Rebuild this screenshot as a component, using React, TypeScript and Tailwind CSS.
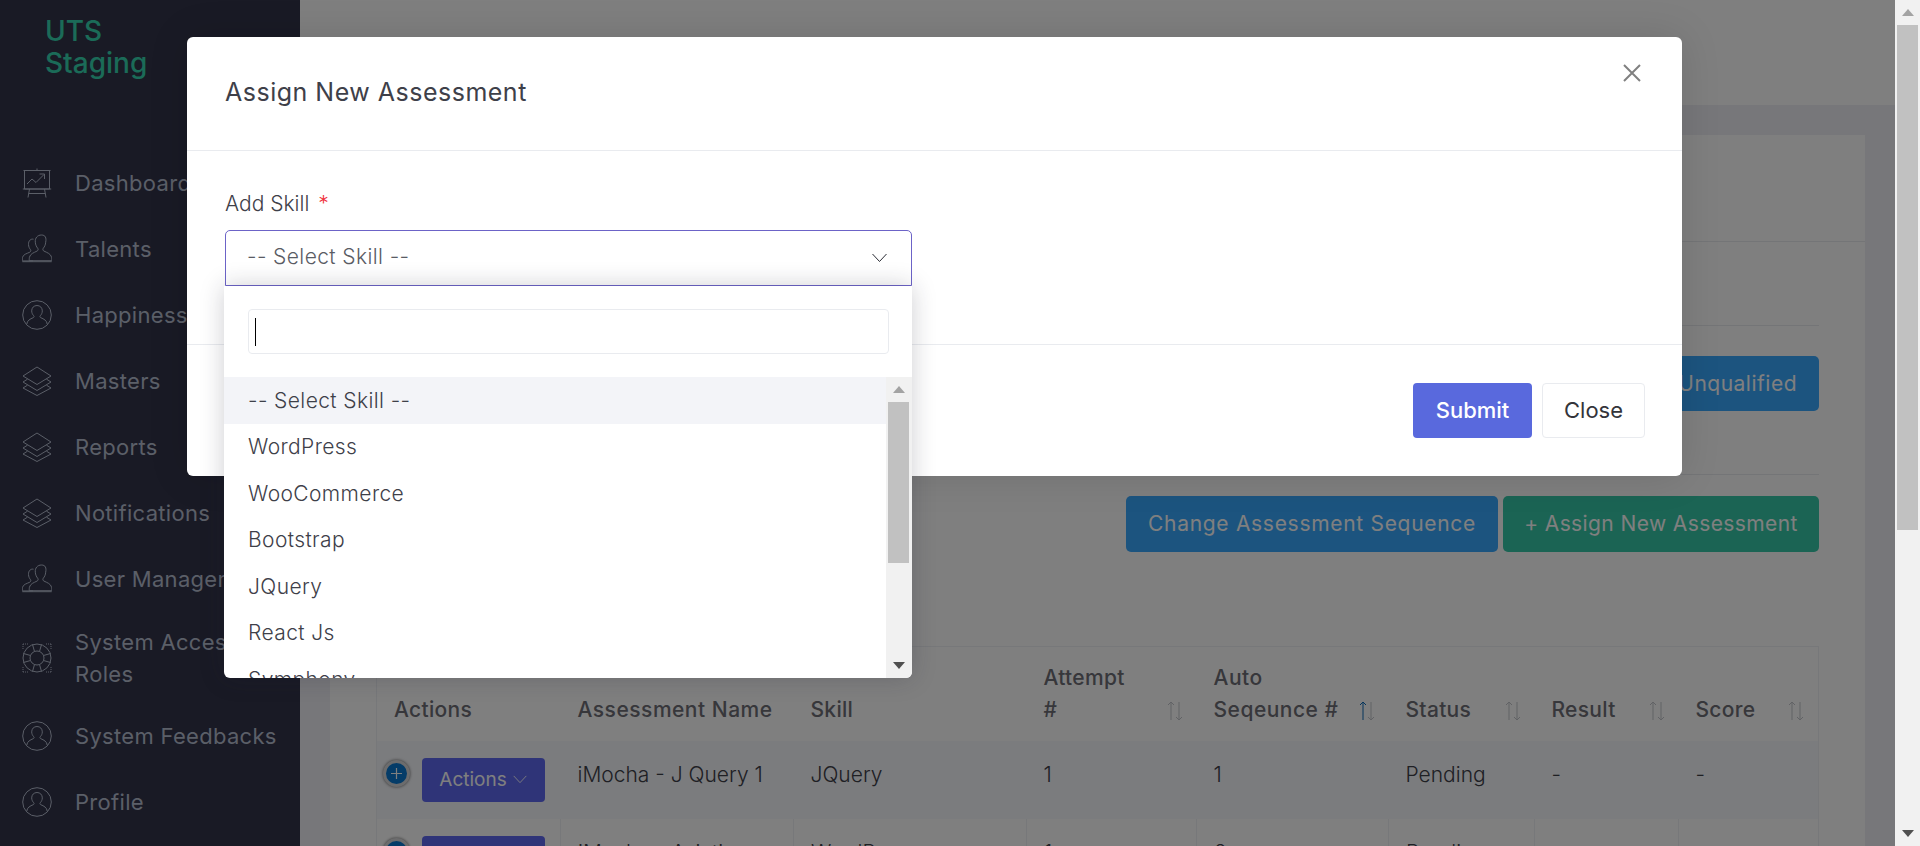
import type { ReactNode } from 'react'

type IconProps = { className?: string }

function PresentationIcon({ className }: IconProps) {
  return (
    <svg viewBox="0 0 30 30" fill="none" stroke="currentColor" strokeWidth="1" className={className}>
      <path d="M15 0.5v2M1.5 2.5h27M2.5 2.5v18.5h25V2.5M0.8 21h28.4" />
      <path d="M5 16l5-5 4 3.5 8-8M17.5 6h5v5" />
      <path d="M7.5 21l-1.5 8.5M22.5 21l1.5 8.5M6.7 25.5h16.6" />
    </svg>
  )
}

function UsersIcon({ className }: IconProps) {
  return (
    <svg viewBox="0 0 30 30" fill="none" stroke="currentColor" strokeWidth="1" className={className}>
      <path d="M11.5 5.2C8.5 4.6 6.3 7 6.5 10.5c.1 2.2 1 4 2 5.2.6.8.3 2-.7 2.5-2.5 1.2-6.8 2.2-7.3 5.2-.2 1.6-.1 3.5-.1 3.5h10.5" />
      <path d="M19.5 1c-4 0-6.600 2.900-6.200 7.200.2 2.600 1.200 4.700 2.400 6 .8 1 .5 2.300-.7 2.900-3 1.500-6.800 2.600-7.600 6.200-.2 1.200-.2 3.400-.2 3.400h22.600s0-2.200-.2-3.400c-.8-3.600-4.600-4.700-7.600-6.200-1.200-.6-1.500-1.900-.7-2.900 1.200-1.300 2.200-3.400 2.400-6C24.500 3.900 23.500 1 19.500 1z" />
      <path d="M0.3 27.700h29.400" />
    </svg>
  )
}

function UserCircleIcon({ className }: IconProps) {
  return (
    <svg viewBox="0 0 30 30" fill="none" stroke="currentColor" strokeWidth="1" className={className}>
      <circle cx="15" cy="15" r="14.300" />
      <path d="M15 5.500c-3.200 0-5.300 2.300-5.300 5.400 0 2 .9 3.700 2 4.800.7.700.4 1.600-.5 2-2.900 1.200-6.200 2.800-6.400 6.500M15 5.500c3.200 0 5.300 2.300 5.300 5.400 0 2-.9 3.700-2 4.800-.7.700-.4 1.600.5 2 2.900 1.200 6.200 2.800 6.400 6.500" />
    </svg>
  )
}

function LayersIcon({ className }: IconProps) {
  return (
    <svg viewBox="0 0 30 30" fill="none" stroke="currentColor" strokeWidth="1" className={className}>
      <path d="M15 1L29 10 15 18.500 1 10z" />
      <path d="M5.500 13.200L1 16l14 8.500L29 16l-4.500-2.800" />
      <path d="M5.500 19.200L1 22l14 7.500L29 22l-4.500-2.800" />
    </svg>
  )
}

function LifebuoyIcon({ className }: IconProps) {
  return (
    <svg viewBox="0 0 30 30" fill="none" stroke="currentColor" strokeWidth="1" className={className}>
      <circle cx="15" cy="15" r="14" />
      <circle cx="15" cy="15" r="7" />
      <path d="M10.500 1.500l2 7M19.500 1.500l-2 7M10.500 28.500l2-7M19.500 28.500l-2-7M1.500 10.500l7 2M1.500 19.500l7-2M28.500 10.500l-7 2M28.500 19.500l-7-2" />
      <path d="M1 1h6M1 1v6M29 1h-6M29 1v6M1 29h6M1 29v-6M29 29h-6M29 29v-6" strokeDasharray="1 1" />
    </svg>
  )
}

function SortArrows({ active }: { active?: boolean }) {
  return (
    <svg viewBox="0 0 18 20" fill="none" strokeWidth="1" className="-mr-[4px] h-[20px] w-[18px] shrink-0">
      <path d="M5 19V1M2 4l3-3 3 3" stroke={active ? '#0c6ab8' : '#c3c5ca'} />
      <path d="M13 1v18M10 16l3 3 3-3" stroke="#c3c5ca" />
    </svg>
  )
}

function ChevronDown({ className }: IconProps) {
  return (
    <svg viewBox="0 0 16 10" fill="none" stroke="currentColor" strokeWidth="1" className={className}>
      <path d="M1 1l7 7.500L15 1" />
    </svg>
  )
}

function ArrowUp({ color }: { color: string }) {
  return (
    <svg viewBox="0 0 12 7" className="h-[7px] w-[12px]">
      <path d="M6 0l6 7H0z" fill={color} />
    </svg>
  )
}

function ArrowDown({ color }: { color: string }) {
  return (
    <svg viewBox="0 0 12 7" className="h-[7px] w-[12px]">
      <path d="M0 0h12L6 7z" fill={color} />
    </svg>
  )
}

type NavItem = { label: ReactNode; icon: (p: IconProps) => ReactNode; tall?: boolean }

const navItems: NavItem[] = [
  { label: 'Dashboard', icon: PresentationIcon },
  { label: 'Talents', icon: UsersIcon },
  { label: 'Happiness Test', icon: UserCircleIcon },
  { label: 'Masters', icon: LayersIcon },
  { label: 'Reports', icon: LayersIcon },
  { label: 'Notifications', icon: LayersIcon },
  { label: 'User Management', icon: UsersIcon },
  { label: 'System Access & Roles', icon: LifebuoyIcon, tall: true },
  { label: 'System Feedbacks', icon: UserCircleIcon },
  { label: 'Profile', icon: UserCircleIcon },
]

const skills = ['WordPress', 'WooCommerce', 'Bootstrap', 'JQuery', 'React Js', 'Symphony']

const rows = [
  { name: 'iMocha - J Query 1', skill: 'JQuery', attempt: '1', seq: '1', status: 'Pending', result: '-', score: '-' },
  { name: 'iMocha - Aviation', skill: 'WordPress', attempt: '1', seq: '2', status: 'Pending', result: '-', score: '-' },
]

function Sidebar() {
  return (
    <aside className="flex w-[300px] shrink-0 flex-col bg-[#32344a] text-[#b6bed0]">
      <div className="h-[150px] pl-[45px] pt-[15px] text-[28px] font-medium leading-[32px] text-[#36d6b0]">
        <div>UTS</div>
        <div>Staging</div>
      </div>
      {navItems.map((item, i) => {
        const Icon = item.icon
        return (
          <div key={i} className={`flex items-center gap-[23px] pl-[22px] pr-[20px] ${item.tall ? 'h-[91px]' : 'h-[66px]'}`}>
            <Icon className="h-[30px] w-[30px] shrink-0" />
            <span className="text-[22px] leading-[32px] tracking-[0.3px]">{item.label}</span>
          </div>
        )
      })}
    </aside>
  )
}

function PageContent() {
  return (
    <main className="min-w-0 flex-1 bg-[#eeeef4]">
      <div className="h-[105px] bg-white" />
      <div className="mx-[30px] mt-[30px] bg-white">
        <div className="h-[107px] border-b border-[#e9ebef]" />
        <div className="px-[46px]">
          <div className="h-[84px] border-b border-[#e9ebef]" />
          <div className="flex h-[149px] justify-end border-b border-[#e9ebef] pt-[30px]">
            <button className="h-[55px] rounded-[5px] bg-[#38a8ff] px-[22px] text-[21px] tracking-[0.5px] text-white">Mark Unqualified</button>
          </div>
          <div className="flex justify-end gap-[5px] pt-[21px]">
            <button className="h-[56px] w-[372px] rounded-[5px] bg-[#38a8ff] text-[21px] tracking-[0.7px] text-white">Change Assessment Sequence</button>
            <button className="h-[56px] w-[316px] rounded-[5px] bg-[#36c8a8] text-[21px] tracking-[0.4px] text-white">+ Assign New Assessment</button>
          </div>
          <table className="mt-[94px] w-full table-fixed border-collapse border border-[#eef0f4] text-[21px] leading-[32px]">
            <colgroup>
              <col className="w-[184px]" />
              <col className="w-[233px]" />
              <col className="w-[233px]" />
              <col className="w-[170px]" />
              <col className="w-[192px]" />
              <col className="w-[146px]" />
              <col className="w-[144px]" />
              <col className="w-[140px]" />
            </colgroup>
            <thead className="text-[#6e6e76]">
              <tr className="h-[94px]">
                <th className="px-[17px] pb-[15px] text-left align-bottom font-medium tracking-[0.3px]">Actions</th>
                <th className="px-[17px] pb-[15px] text-left align-bottom font-medium tracking-[0.5px]">Assessment Name</th>
                <th className="px-[17px] pb-[15px] text-left align-bottom font-medium tracking-[0.3px]">Skill</th>
                <th className="px-[17px] pb-[15px] text-left align-bottom font-medium tracking-[0.3px]">
                  <div className="flex items-end justify-between">
                    <span>Attempt<br />#</span>
                    <span className="pb-[5px]"><SortArrows /></span>
                  </div>
                </th>
                <th className="px-[17px] pb-[15px] text-left align-bottom font-medium tracking-[0.5px]">
                  <div className="flex items-end justify-between">
                    <span>Auto<br />Seqeunce #</span>
                    <span className="pb-[5px]"><SortArrows active /></span>
                  </div>
                </th>
                <th className="px-[17px] pb-[15px] text-left align-bottom font-medium tracking-[0.3px]">
                  <div className="flex items-end justify-between">
                    <span>Status</span>
                    <span className="pb-[5px]"><SortArrows /></span>
                  </div>
                </th>
                <th className="px-[17px] pb-[15px] text-left align-bottom font-medium tracking-[0.3px]">
                  <div className="flex items-end justify-between">
                    <span>Result</span>
                    <span className="pb-[5px]"><SortArrows /></span>
                  </div>
                </th>
                <th className="px-[17px] pb-[15px] text-left align-bottom font-medium tracking-[0.3px]">
                  <div className="flex items-end justify-between">
                    <span>Score</span>
                    <span className="pb-[5px]"><SortArrows /></span>
                  </div>
                </th>
              </tr>
            </thead>
            <tbody className="font-light text-[#3e4049]">
              {rows.map((r, i) => (
                <tr key={r.name} className={i === 0 ? 'h-[78px] bg-[#f6f8fc]' : 'h-[78px]'}>
                  <td className="pl-[6px] pt-[17px] align-top">
                    <div className="flex gap-[12px]">
                      <div className="mt-[2px] flex h-[27px] w-[27px] items-center justify-center rounded-full border-[3px] border-[#d8d8da] bg-[#0a78d0] shadow-[0_0_3px_#666]">
                        <svg viewBox="0 0 13 13" stroke="white" strokeWidth="1.200" className="h-[13px] w-[13px]">
                          <path d="M6.500 1v11M1 6.500h11" />
                        </svg>
                      </div>
                      <button className="flex h-[44px] w-[123px] items-center justify-center gap-[5px] rounded-[4px] bg-[#5e68f0] text-[19px] font-normal text-white">
                        Actions <ChevronDown className="h-[9px] w-[16px]" />
                      </button>
                    </div>
                  </td>
                  <td className={`px-[17px] pt-[18px] align-top ${i ? 'border-l border-[#eef0f4]' : ''}`}>{r.name}</td>
                  <td className={`px-[17px] pt-[18px] align-top ${i ? 'border-l border-[#eef0f4]' : ''}`}>{r.skill}</td>
                  <td className={`px-[17px] pt-[18px] align-top ${i ? 'border-l border-[#eef0f4]' : ''}`}>{r.attempt}</td>
                  <td className={`px-[17px] pt-[18px] align-top ${i ? 'border-l border-[#eef0f4]' : ''}`}>{r.seq}</td>
                  <td className={`px-[17px] pt-[18px] align-top ${i ? 'border-l border-[#eef0f4]' : ''}`}>{r.status}</td>
                  <td className={`px-[17px] pt-[18px] align-top ${i ? 'border-l border-[#eef0f4]' : ''}`}>{i ? '' : r.result}</td>
                  <td className={`px-[17px] pt-[18px] align-top ${i ? 'border-l border-[#eef0f4]' : ''}`}>{i ? '' : r.score}</td>
                </tr>
              ))}
            </tbody>
          </table>
        </div>
      </div>
    </main>
  )
}

function SkillDropdown() {
  return (
    <div className="absolute left-[37px] top-[249px] z-10 flex h-[392px] w-[688px] flex-col overflow-hidden rounded-b-[6px] bg-white shadow-[0_0_24px_rgba(30,32,50,0.22)]">
      <div className="p-[23px] pl-[24px]">
        <div className="flex h-[45px] w-[641px] items-center rounded-[4px] border border-[#e9ebef] pl-[6px]">
          <div className="h-[28px] w-px bg-black" />
        </div>
      </div>
      <div className="flex min-h-0 flex-1">
        <div className="min-w-0 flex-1 overflow-hidden text-[21px] font-light leading-[32px] tracking-[0.4px] text-[#3e4049]">
          <div className="flex h-[46.5px] items-center bg-[#f3f4f8] pl-[24px] pt-[1px]">-- Select Skill --</div>
          {skills.map((s) => (
            <div key={s} className="flex h-[46.5px] items-center pl-[24px] pt-[1px]">{s}</div>
          ))}
        </div>
        <div className="flex w-[26px] shrink-0 flex-col items-center bg-[#f1f1f1] pr-[1px]">
          <div className="flex h-[25px] items-center"><ArrowUp color="#a3a3a3" /></div>
          <div className="h-[161px] w-[21px] bg-[#c1c1c1]" />
          <div className="flex-1" />
          <div className="flex h-[25px] items-center"><ArrowDown color="#505050" /></div>
        </div>
      </div>
    </div>
  )
}

function AssignModal() {
  return (
    <div className="absolute left-[187px] top-[37px] z-20 h-[439px] w-[1495px] rounded-[6px] bg-white text-[#3e4049] shadow-[0_0_40px_rgba(0,0,0,0.12)]">
      <div className="flex h-[114px] items-start justify-between border-b border-[#e9ebef] pl-[38px] pr-[41px]">
        <h2 className="mt-[37px] text-[25px] leading-[36px] tracking-[0.5px]">Assign New Assessment</h2>
        <svg viewBox="0 0 18 18" fill="none" stroke="#808080" strokeWidth="2" className="mt-[27px] h-[18px] w-[18px]">
          <path d="M1 1l16 16M17 1L1 17" />
        </svg>
      </div>
      <div className="h-[194px] border-b border-[#e9ebef] pl-[38px] pt-[37px]">
        <label className="block text-[21px] font-light leading-[32px]">
          Add Skill <span className="ml-[3px] text-[#f0323c]">*</span>
        </label>
        <div className="mt-[10px] flex h-[56px] w-[687px] items-center justify-between rounded-t-[5px] border border-[#6c63c7] pl-[21px] pr-[23px] text-[21px] font-light tracking-[0.4px] text-[#5a5c64]">
          <span className="mb-[2px]">-- Select Skill --</span>
          <ChevronDown className="mb-[1px] h-[10px] w-[17px] text-[#2a2c34]" />
        </div>
      </div>
      <div className="flex justify-end gap-[10px] pr-[37px] pt-[38px]">
        <button className="h-[55px] w-[119px] rounded-[4px] bg-[#5969dd] text-[22px] font-medium text-white">Submit</button>
        <button className="h-[55px] w-[103px] rounded-[4px] border border-[#e9ebef] bg-white text-[22px] text-[#33343a]">Close</button>
      </div>
      <SkillDropdown />
    </div>
  )
}

function PageScrollbar() {
  return (
    <div className="flex w-[25px] shrink-0 flex-col items-center bg-[#f1f1f1]">
      <div className="flex h-[25px] items-center"><ArrowUp color="#a3a3a3" /></div>
      <div className="h-[505px] w-[21px] bg-[#c1c1c1]" />
      <div className="flex-1" />
      <div className="flex h-[25px] items-center"><ArrowDown color="#505050" /></div>
    </div>
  )
}

export default function App() {
  return (
    <div className="flex h-[846px] overflow-hidden font-['Inter','Noto_Sans',sans-serif]">
      <div className="relative flex min-w-0 flex-1 overflow-hidden">
        <Sidebar />
        <PageContent />
        <div className="absolute inset-0 z-10 bg-black/50" />
        <AssignModal />
      </div>
      <PageScrollbar />
    </div>
  )
}
